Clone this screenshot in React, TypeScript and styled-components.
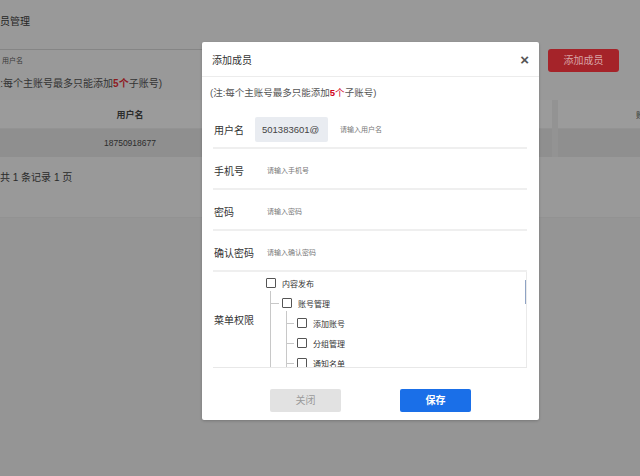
import styled, {createGlobalStyle} from 'styled-components';

const GlobalStyle = createGlobalStyle`
  html, body {
    margin: 0;
    padding: 0;
  }
  body {
    width: 640px;
    height: 476px;
    overflow: hidden;
    background: #959595;
    font-family: "Liberation Sans", "Noto Sans CJK SC", sans-serif;
  }
`;

type TreeNode = {label: string; level: number};

const treeNodes: TreeNode[] = [
  {label: '内容发布', level: 0},
  {label: '账号管理', level: 1},
  {label: '添加账号', level: 2},
  {label: '分组管理', level: 2},
  {label: '通知名单', level: 2},
];

const formRows = [
  {label: '手机号', placeholder: '请输入手机号'},
  {label: '密码', placeholder: '请输入密码'},
  {label: '确认密码', placeholder: '请输入确认密码'},
];

export default function App() {
  return (
    <>
      <GlobalStyle />
      <Screen>
        <Page>
          <PageTitle>成员管理</PageTitle>
          <SearchBar>
            <SearchInput>用户名</SearchInput>
            <AddButton>添加成员</AddButton>
          </SearchBar>
          <PageNote>
            (注:每个主账号最多只能添加<Red>5个</Red>子账号)
          </PageNote>
          <Table>
            <HeadRow>
              <Cell $head>用户名</Cell>
              <Cell />
              <Cell $edge $right>账号</Cell>
            </HeadRow>
            <DataRow>
              <Cell>18750918677</Cell>
              <Cell />
              <Cell $edge />
            </DataRow>
          </Table>
          <Pager>共 1 条记录 1 页</Pager>
        </Page>

        <Modal>
          <ModalHeader>
            <span>添加成员</span>
            <Close>×</Close>
          </ModalHeader>
          <ModalBody>
            <Note>
              (注:每个主账号最多只能添加<NoteRed><b>5</b>个</NoteRed>子账号)
            </Note>
            <FormRow $first>
              <Label $width={41}>用户名</Label>
              <Autofill>501383601@</Autofill>
              <Placeholder>请输入用户名</Placeholder>
            </FormRow>
            {formRows.map((r) => (
              <FormRow key={r.label}>
                <Label>{r.label}</Label>
                <Placeholder $flush>{r.placeholder}</Placeholder>
              </FormRow>
            ))}
            <TreeRow>
              <Label $width={52}>菜单权限</Label>
              <TreeBox>
                <TreeList>
                  {treeNodes.map((n) => (
                    <TreeItem key={n.label} $level={n.level}>
                      <Check />
                      <span>{n.label}</span>
                    </TreeItem>
                  ))}
                </TreeList>
                <Thumb />
              </TreeBox>
            </TreeRow>
          </ModalBody>
          <Footer>
            <FooterButton>关闭</FooterButton>
            <FooterButton $primary>保存</FooterButton>
          </Footer>
        </Modal>
      </Screen>
    </>
  );
}

const Screen = styled.div`
  position: relative;
  width: 640px;
  height: 476px;
  overflow: hidden;
`;

const Page = styled.div`
  height: 217px;
  background: #999;
  margin-left: -13px;
  width: 680px;
  color: #2a2a2a;
  display: flex;
  flex-direction: column;
  box-shadow: 0 1px 0 #929292;
`;

const PageTitle = styled.div`
  font-size: 10px;
  line-height: 14px;
  padding: 15px 0 0 3px;
  height: 49px;
  box-sizing: border-box;
  color: #262626;
`;

const SearchBar = styled.div`
  display: flex;
  align-items: stretch;
  height: 24px;
`;

const SearchInput = styled.div`
  box-sizing: border-box;
  width: 330px;
  border-top: 1px solid #858585;
  font-size: 7px;
  color: #3a3a3a;
  padding-left: 15px;
  line-height: 21px;
`;

const AddButton = styled.div`
  margin-left: 231px;
  width: 71px;
  height: 23px;
  background: #a52329;
  border-radius: 3px;
  color: #d8a4a6;
  font-size: 10px;
  line-height: 23px;
  text-align: center;
`;

const PageNote = styled.div`
  font-size: 10px;
  line-height: 14px;
  padding-top: 4px;
  height: 27px;
  box-sizing: border-box;
  color: #333;
`;

const Red = styled.span`
  color: #8e1a1f;
  font-weight: bold;
`;

const Table = styled.div`
  display: flex;
  flex-direction: column;
`;

const HeadRow = styled.div`
  display: grid;
  grid-template-columns: 286px 279px 115px;
  height: 28px;
  background: #9b9b9b;
  border-bottom: 1px solid #939393;
`;

const DataRow = styled(HeadRow)`
  height: 28px;
  background: #8f8f8f;
  border-bottom: none;
`;

const Cell = styled.div<{$head?: boolean; $edge?: boolean; $right?: boolean}>`
  font-size: ${(p) => (p.$head ? '9px' : '8.5px')};
  font-weight: ${(p) => (p.$head ? 'bold' : 'normal')};
  color: #2c2c2c;
  display: flex;
  align-items: center;
  justify-content: ${(p) => (p.$right ? 'flex-end' : 'center')};
  padding-right: ${(p) => (p.$right ? '14px' : '0')};
  border-left: ${(p) => (p.$edge ? '1px solid #939393' : 'none')};
  box-shadow: ${(p) => (p.$edge ? 'inset 4px 0 0 transparent, inset 5px 0 0 #939393' : 'none')};
`;

const Pager = styled.div`
  font-size: 10px;
  line-height: 12px;
  margin-left: 13px;
  padding-top: 15px;
  color: #2a2a2a;
`;

const Modal = styled.div`
  position: absolute;
  left: 202px;
  top: 42px;
  width: 337px;
  height: 378px;
  background: #fff;
  border-radius: 2px;
  box-shadow: 0 1px 3px rgba(0, 0, 0, 0.2);
  display: flex;
  flex-direction: column;
  color: #333;
`;

const ModalHeader = styled.div`
  height: 34px;
  border-bottom: 1px solid #ececec;
  display: flex;
  align-items: center;
  justify-content: space-between;
  padding: 0 10px 0 10px;
  font-size: 10px;
  color: #333;
`;

const Close = styled.span`
  font-size: 15px;
  font-weight: bold;
  color: #555;
`;

const ModalBody = styled.div`
  padding: 0 12px 0 11px;
  display: flex;
  flex-direction: column;
`;

const Note = styled.div`
  font-size: 9.5px;
  color: #555;
  height: 30px;
  line-height: 32px;
  margin-left: -3px;
`;

const NoteRed = styled.span`
  color: #d0021b;
`;

const FormRow = styled.div<{$first?: boolean}>`
  box-sizing: border-box;
  height: ${(p) => (p.$first ? 42 : 41)}px;
  padding-top: ${(p) => (p.$first ? 4 : 3)}px;
  display: flex;
  align-items: center;
  border-bottom: 2px solid #efefef;
  padding-left: 1px;
`;

const Label = styled.div<{$width?: number}>`
  width: ${(p) => p.$width ?? 53}px;
  font-size: 10px;
  color: #333;
  flex-shrink: 0;
  white-space: nowrap;
`;

const Autofill = styled.div`
  width: 66px;
  height: 25px;
  background: #e9ecf1;
  border-radius: 2px;
  font-size: 9.5px;
  line-height: 25px;
  padding-left: 7px;
  color: #444;
  overflow: hidden;
  white-space: nowrap;
`;

const Placeholder = styled.div<{$flush?: boolean}>`
  font-size: 7px;
  color: #777;
  margin-left: ${(p) => (p.$flush ? '0' : '12px')};
`;

const TreeRow = styled.div`
  display: flex;
  align-items: center;
  height: 95px;
  padding-left: 1px;
  border-bottom: 1px solid #e8e8e8;
`;

const TreeBox = styled.div`
  position: relative;
  flex: 1;
  height: 100%;
  overflow: hidden;
  border-right: 1px solid #eaeaea;
`;

const TreeList = styled.div`
  display: flex;
  flex-direction: column;
  gap: 10px;
  padding-top: 6px;
`;

const TreeItem = styled.div<{$level: number}>`
  position: relative;
  display: flex;
  align-items: center;
  gap: 6px;
  height: 10px;
  font-size: 8px;
  color: #333;
  margin-left: ${(p) => p.$level * 15 + (p.$level > 0 ? 1 : 0)}px;
  &::before {
    content: '';
    display: ${(p) => (p.$level > 0 ? 'block' : 'none')};
    position: absolute;
    left: -11px;
    top: 5px;
    width: 8px;
    border-top: 1px solid #c8c8c8;
  }
  &::after {
    content: '';
    display: ${(p) => (p.$level < 2 ? 'block' : 'none')};
    position: absolute;
    left: 4px;
    top: 13px;
    height: 100px;
    border-left: 1px solid #c8c8c8;
  }
`;

const Check = styled.span`
  width: 8px;
  height: 8px;
  border: 1px solid #555;
  border-radius: 1px;
  flex-shrink: 0;
`;

const Thumb = styled.div`
  position: absolute;
  right: -1px;
  top: 8px;
  width: 2px;
  height: 24px;
  background: #8fa3c4;
`;

const Footer = styled.div`
  display: flex;
  justify-content: center;
  gap: 59px;
  padding-top: 21px;
`;

const FooterButton = styled.div<{$primary?: boolean}>`
  width: 71px;
  height: 23px;
  border-radius: 2px;
  font-size: 10px;
  line-height: 23px;
  text-align: center;
  background: ${(p) => (p.$primary ? '#1a6fe8' : '#e2e2e2')};
  color: ${(p) => (p.$primary ? '#fff' : '#9a9a9a')};
  font-weight: ${(p) => (p.$primary ? 'bold' : 'normal')};
`;
